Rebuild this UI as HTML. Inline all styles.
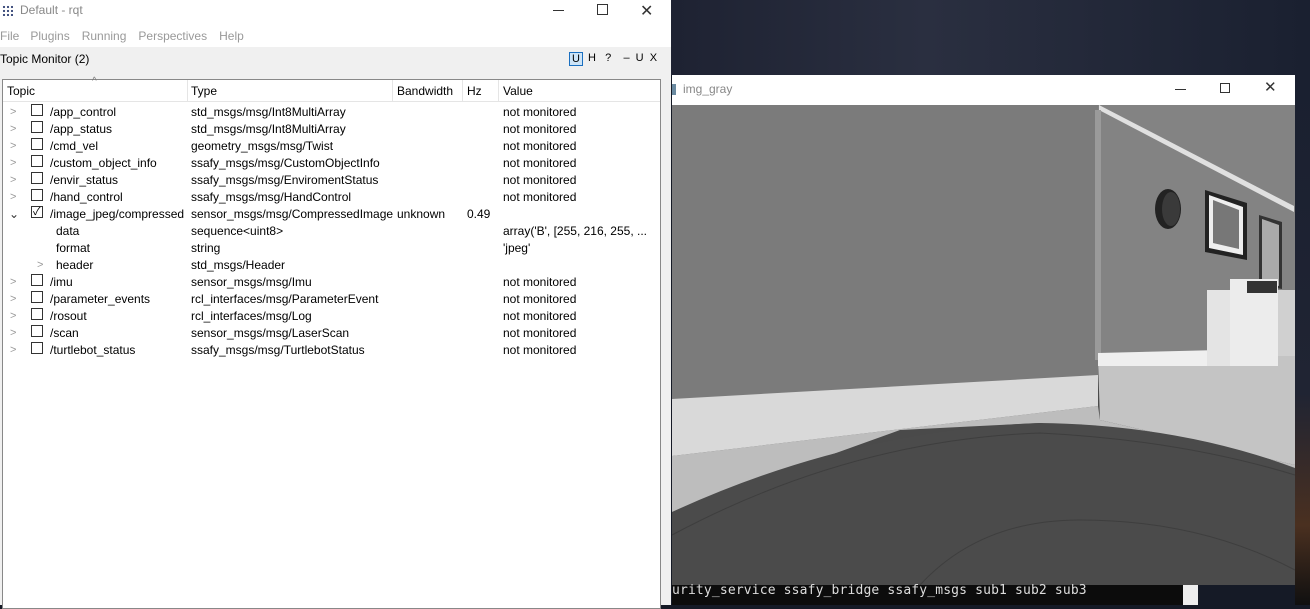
<!DOCTYPE html>
<html><head><meta charset="utf-8"><style>
*{margin:0;padding:0;box-sizing:border-box}
body{width:1310px;height:605px;overflow:hidden;position:relative;background:#151a26;font-family:"Liberation Sans","Noto Sans CJK KR",sans-serif;font-size:12px;color:#000}
.abs{position:absolute}
#rqt{left:0;top:0;width:671px;height:605px;background:#f0f0f0}
.row{position:absolute;left:0;height:17px;line-height:17px;white-space:nowrap}
.row span{position:absolute;top:0}
.cb{position:absolute;width:12px;height:12px;border:1px solid #333;background:#fff;top:2px;left:31px}
.arr{position:absolute;left:10px;top:0;color:#999;font-size:11px}
</style></head><body>
<div class="abs" style="left:671px;top:0;width:639px;height:75px;background:linear-gradient(90deg,#1e2232,#2a2f40 40%,#1a2030)"></div>
<div class="abs" style="left:1295px;top:75px;width:15px;height:530px;background:linear-gradient(#1a2030,#202433 60%,#4a3020 85%,#101010)"></div>

<div id="rqt" class="abs">
 <div class="abs" style="left:0;top:0;width:671px;height:23px;background:#fff"></div>
 <div class="abs" style="left:2px;top:5px;width:11px;height:11px;background:radial-gradient(circle,#3a4a7a 1px,transparent 1.3px) 0 0/4px 4px"></div>
 <div class="abs" style="left:20px;top:3px;font-size:12px;color:#888">Default - rqt</div>
 <div class="abs" style="left:553px;top:10px;width:11px;height:1px;background:#333"></div>
 <div class="abs" style="left:597px;top:4px;width:11px;height:11px;border:1px solid #333"></div>
 <div class="abs" style="left:640px;top:1px;font-size:16px;color:#333">✕</div>
 <div class="abs" style="left:0;top:23px;width:671px;height:24px;background:#fff"></div>
 <div class="abs" style="left:0;top:29px;color:#999">File<span style="margin-left:11px">Plugins</span><span style="margin-left:12px">Running</span><span style="margin-left:12px">Perspectives</span><span style="margin-left:12px">Help</span></div>
 <div class="abs" style="left:0;top:52px">Topic Monitor (2)</div>
 <div class="abs" style="left:569px;top:52px;width:14px;height:14px;border:1px solid #1a6fc0;background:#cde4f7;font-size:11px;line-height:12px;text-align:center">U</div>
 <div class="abs" style="left:588px;top:52px;font-size:11px">H&nbsp;&nbsp;&nbsp;?&nbsp;&nbsp;&nbsp;&nbsp;–&nbsp;&nbsp;U&nbsp;&nbsp;X</div>
 <div class="abs" style="left:2px;top:79px;width:659px;height:530px;background:#fff;border:1px solid #888"></div>
 <div class="abs" style="left:3px;top:80px;width:657px;height:22px;border-bottom:1px solid #e5e5e5"></div>
 <div class="abs" style="left:92px;top:76px;color:#777;font-size:10px">^</div>
 <div class="abs" style="left:187px;top:80px;width:1px;height:22px;background:#e5e5e5"></div>
 <div class="abs" style="left:392px;top:80px;width:1px;height:22px;background:#e5e5e5"></div>
 <div class="abs" style="left:462px;top:80px;width:1px;height:22px;background:#e5e5e5"></div>
 <div class="abs" style="left:498px;top:80px;width:1px;height:22px;background:#e5e5e5"></div>
 <div class="row" style="top:83px;width:660px"><span style="left:7px">Topic</span><span style="left:191px">Type</span><span style="left:397px">Bandwidth</span><span style="left:467px">Hz</span><span style="left:503px">Value</span></div>
 <div id="rows"></div>
</div>

<div class="abs" style="left:672px;top:75px;width:623px;height:30px;background:#fff"></div>
<div class="abs" style="left:672px;top:84px;width:4px;height:11px;background:#6a8aa0"></div>
<div class="abs" style="left:683px;top:82px;color:#888;font-size:12px">img_gray</div>
<div class="abs" style="left:1175px;top:89px;width:11px;height:1px;background:#333"></div>
<div class="abs" style="left:1220px;top:83px;width:10px;height:10px;border:1px solid #333"></div>
<div class="abs" style="left:1264px;top:78px;font-size:15px;color:#333">✕</div>
<svg class="abs" style="left:672px;top:105px" width="623" height="480" viewBox="672 105 623 480">
 <rect x="672" y="105" width="623" height="480" fill="#4a4a4a"/>
 <rect x="672" y="105" width="426" height="300" fill="#7b7b7b"/>
 <rect x="1098" y="105" width="197" height="255" fill="#838383"/>
 <polygon points="1099,105 1294,206 1294,212 1099,110" fill="#e0e0e0"/>
 <rect x="1095" y="110" width="6" height="250" fill="#9a9a9a"/>
 <polygon points="1098,360 1295,355 1295,465 1100,420" fill="#c4c4c4"/>
 <polygon points="1098,353 1220,350 1220,366 1098,366" fill="#efefef"/>
 <polygon points="672,456 1098,406 1100,420 1295,465 1295,470 1160,440 1040,423 900,430 672,512" fill="#bdbdbd"/>
 <polygon points="672,399 1098,375 1098,406 672,456" fill="#d9d9d9"/>
 <path d="M672,512 Q850,430 1040,423 Q1180,425 1295,468 L1295,585 L672,585Z" fill="#4b4b4b"/>
 <path d="M672,535 Q850,440 1040,433 Q1180,440 1295,475" stroke="#3e3e3e" fill="none"/>
 <path d="M920,585 Q980,520 1080,520 Q1200,520 1295,570" stroke="#3e3e3e" fill="none"/>
 <ellipse cx="1168" cy="209" rx="13" ry="20" fill="#222"/>
 <ellipse cx="1171" cy="209" rx="9" ry="17" fill="#3a3a3a"/>
 <polygon points="1205,190 1247,203 1247,260 1205,252" fill="#222"/>
 <polygon points="1209,195 1243,207 1243,255 1209,248" fill="#eee"/>
 <polygon points="1213,200 1239,210 1239,249 1213,243" fill="#777"/>
 <polygon points="1259,215 1282,222 1282,289 1259,285" fill="#333"/>
 <polygon points="1262,219 1279,225 1279,286 1262,282" fill="#aaa"/>
 <rect x="1207" y="290" width="40" height="76" fill="#e4e4e4"/>
 <rect x="1230" y="279" width="48" height="87" fill="#ececec"/>
 <rect x="1247" y="281" width="30" height="12" fill="#333"/>
 <rect x="1278" y="290" width="17" height="66" fill="#d0d0d0"/>
</svg>
<div class="abs" style="left:672px;top:585px;width:511px;height:20px;background:#0c0c0c"></div>
<div class="abs" style="left:1183px;top:585px;width:15px;height:20px;background:#eee"></div>
<div class="abs" style="left:672px;top:583px;color:#ddd;font-family:'DejaVu Sans Mono','Liberation Mono',monospace;font-size:13px;letter-spacing:0.15px">urity_service ssafy_bridge ssafy_msgs sub1 sub2 sub3</div>

<script>
var d=[
["/app_control","std_msgs/msg/Int8MultiArray","","","not monitored",0],
["/app_status","std_msgs/msg/Int8MultiArray","","","not monitored",0],
["/cmd_vel","geometry_msgs/msg/Twist","","","not monitored",0],
["/custom_object_info","ssafy_msgs/msg/CustomObjectInfo","","","not monitored",0],
["/envir_status","ssafy_msgs/msg/EnviromentStatus","","","not monitored",0],
["/hand_control","ssafy_msgs/msg/HandControl","","","not monitored",0],
["/image_jpeg/compressed","sensor_msgs/msg/CompressedImage","unknown","0.49","",2],
["data","sequence<uint8>","","","array('B', [255, 216, 255, ...",1],
["format","string","","","'jpeg'",1],
["header","std_msgs/Header","","","",3],
["/imu","sensor_msgs/msg/Imu","","","not monitored",0],
["/parameter_events","rcl_interfaces/msg/ParameterEvent","","","not monitored",0],
["/rosout","rcl_interfaces/msg/Log","","","not monitored",0],
["/scan","sensor_msgs/msg/LaserScan","","","not monitored",0],
["/turtlebot_status","ssafy_msgs/msg/TurtlebotStatus","","","not monitored",0]];
var h="";function e(s){return s.replace(/&/g,"&amp;").replace(/</g,"&lt;")}
d.forEach(function(r,i){var t=104+i*17,k=r[5];h+='<div class="row" style="top:'+t+'px;width:660px">';
if(k==0||k==2){h+='<span class="arr">'+(k==2?'<span style="color:#333;font-size:12px;position:relative;left:-1px">&#8964;</span>':'&gt;')+'</span><span class="cb">'+(k==2?'<span style="position:absolute;left:1px;top:-3px;font-size:11px">✓</span>':'')+'</span><span style="left:50px">'+e(r[0])+'</span>';}
else{if(k==3)h+='<span class="arr" style="left:37px">&gt;</span>';h+='<span style="left:56px">'+e(r[0])+'</span>';}
h+='<span style="left:191px">'+e(r[1])+'</span><span style="left:397px">'+r[2]+'</span><span style="left:467px">'+r[3]+'</span><span style="left:503px">'+e(r[4])+'</span></div>';});
document.getElementById("rows").innerHTML=h;
</script>
</body></html>
